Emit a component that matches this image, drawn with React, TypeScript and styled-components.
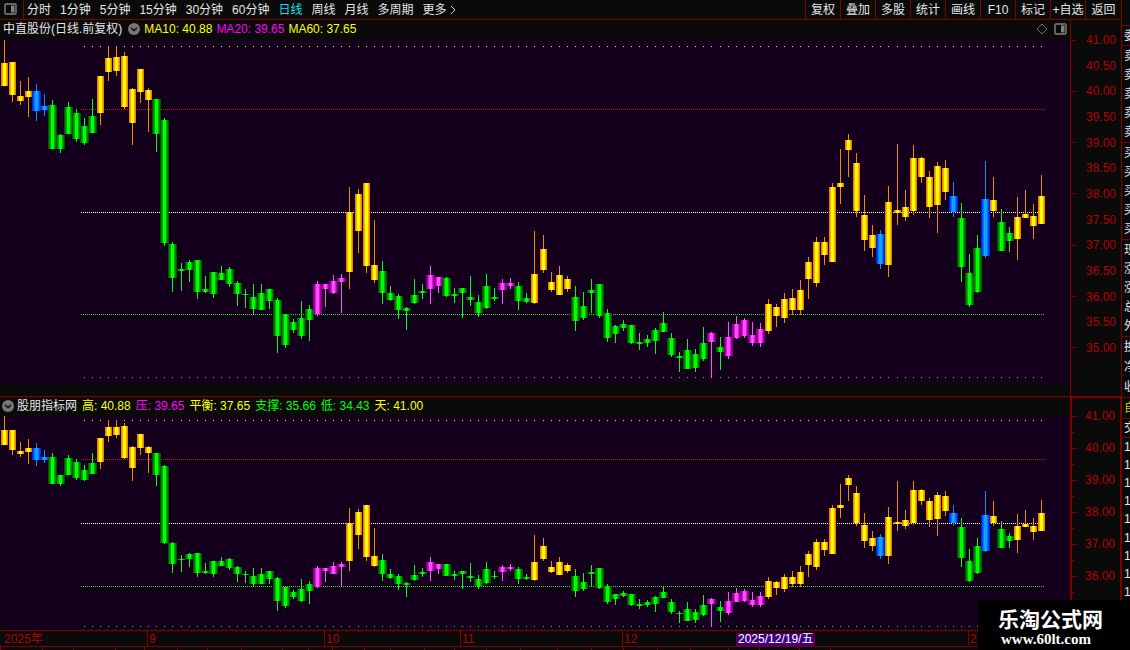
import React from "react";
import styled, { createGlobalStyle } from "styled-components";

const RED = "#800000";

const Global = createGlobalStyle`
  * { box-sizing: border-box; }
  body {
    margin: 0;
    background: #0a0a0a;
    color: #e6e6e6;
    font: 12px/16px "Liberation Sans", "Noto Sans CJK SC", sans-serif;
    overflow: hidden;
  }
  button { font: inherit; }
`;

const Page = styled.div`
  position: relative;
  display: flex;
  height: 100vh;
  overflow: hidden;
`;
const Workspace = styled.main`
  flex: 1;
  min-width: 0;
  display: flex;
  flex-direction: column;
`;
const Toolbar = styled.nav`
  flex: none;
  display: flex;
  height: 20px;
  border-bottom: 1px solid ${RED};
`;
const IconButton = styled.button`
  display: flex;
  align-items: center;
  justify-content: center;
  width: 24px;
  padding: 0 2px 2px 0;
  border: 0;
  border-right: 1px solid ${RED};
  background: none;
`;
const Periods = styled.div`
  flex: 1;
  display: flex;
  gap: 9px;
  padding-left: 3px;
`;
const Period = styled.button<{ $active?: boolean }>`
  display: flex;
  align-items: center;
  padding: 0;
  border: 0;
  background: none;
  white-space: nowrap;
  color: ${(p) => (p.$active ? "#00e6f0" : "#e6e6e6")};
`;
const Tool = styled.button`
  width: 35px;
  padding: 0;
  border: 0;
  border-left: 1px solid ${RED};
  background: none;
  color: #e6e6e6;
  white-space: nowrap;
  &:last-child { width: 36px; }
`;
const Pane = styled.section<{ $divided?: boolean }>`
  flex: none;
  display: flex;
  border-top: ${(p) => (p.$divided ? `1px solid ${RED}` : "0")};
`;
const PaneBody = styled.div<{ $gap?: boolean }>`
  flex: 1;
  min-width: 0;
  padding-bottom: ${(p) => (p.$gap ? "13px" : "0")};
`;
const Legend = styled.header<{ $short?: boolean }>`
  display: flex;
  align-items: center;
  height: ${(p) => (p.$short ? "19px" : "20px")};
  padding: 0 3px 2px 3px;
  gap: 4px;
  white-space: nowrap;
`;
const Title = styled.span`
  color: #e6e6e6;
  margin-right: 2px;
`;
const Reading = styled.span<{ $color: string }>`
  color: ${(p) => p.$color};
`;
const Heading = styled.div`
  display: flex;
  align-items: center;
  gap: 3px;
`;
const Readings = styled.div`
  display: flex;
  gap: 5px;
  margin-left: -1px;
`;
const LowerLegend = styled(Legend)`
  padding-left: 2px;
  gap: 4px;
`;
const HeaderIcons = styled.div`
  display: flex;
  align-items: center;
  gap: 6px;
  margin-left: auto;
`;
const Round = styled.button`
  display: flex;
  padding: 0;
  border: 0;
  background: none;
`;
const Plot = styled.div`
  margin: 0 1px;
  background: #14001c;
  overflow: hidden;
  svg { display: block; margin-left: -1px; }
`;
const Scale = styled.div<{ $strong?: boolean }>`
  flex: none;
  display: flex;
  flex-direction: column;
  justify-content: space-between;
  width: 51px;
  border-left: ${(p) => (p.$strong ? "2px" : "1px")} solid ${RED};
  border-right: ${(p) => (p.$strong ? "1px" : "0")} solid ${RED};
  border-top: ${(p) => (p.$strong ? "1px" : "0")} solid ${RED};
  padding: ${(p) => (p.$strong ? "10px 0 14px" : "12px 0 40px")};
`;
const Mark = styled.div<{ $minor?: boolean }>`
  display: flex;
  align-items: center;
  justify-content: space-between;
  height: 16px;
  padding-right: 5px;
  color: #b40000;
  &::before {
    content: "";
    width: ${(p) => (p.$minor ? "2px" : "5px")};
    height: 1px;
    background: ${RED};
  }
`;
const TimeAxis = styled.div`
  flex: none;
  height: 17px;
  border-top: 1px solid ${RED};
  border-bottom: 1px solid ${RED};
  svg { display: block; }
`;
const TimeLabels = styled.div`
  display: flex;
  height: 13px;
  line-height: 12px;
  margin-top: -1px;
`;
const Month = styled.span<{ $w: number; $first?: boolean }>`
  flex: none;
  width: ${(p) => p.$w}px;
  padding-left: ${(p) => (p.$first ? "4px" : "1px")};
  border-left: ${(p) => (p.$first ? "0" : `1px solid ${RED}`)};
  color: #b40000;
  white-space: nowrap;
`;
const Cursor = styled.span`
  flex: none;
  width: 79px;
  height: 13px;
  margin-right: 153px;
  padding-left: 1px;
  background: #400080;
  border-left: 1px solid ${RED};
  border-right: 1px solid ${RED};
  color: #fff;
  white-space: nowrap;
`;
const Tabs = styled.div`
  flex: none;
  display: flex;
  height: 20px;
`;
const Tab = styled.span<{ $w: number }>`
  flex: none;
  width: ${(p) => p.$w}px;
  border-right: 1px solid ${RED};
`;
const Sidebar = styled.aside`
  flex: none;
  width: 9px;
  overflow: hidden;
  border-left: 1px solid ${RED};
  padding-top: 25px;
  white-space: nowrap;
`;
const Group = styled.div<{ $h: number; $color?: string }>`
  display: flex;
  flex-direction: column;
  justify-content: space-around;
  height: ${(p) => p.$h}px;
  padding-left: 2px;
  border-top: 1px solid ${RED};
  color: ${(p) => p.$color ?? "#e6e6e6"};
`;
const Watermark = styled.div`
  position: absolute;
  right: 0;
  bottom: 0;
  width: 152px;
  height: 50px;
  padding: 6px 0 0 20px;
  background: #000;
  color: #fff;
`;
const Brand = styled.div`
  font: bold 21px/24px "Noto Sans CJK SC", sans-serif;
`;
const Site = styled.div`
  padding-left: 3px;
  font: bold 15px/18px "Liberation Serif", serif;
`;

type Kind = "Y" | "G" | "M" | "B";
type Candle = [Kind, number, number, number, number];

/* kind, high, body top, body bottom, low */
const candles: Candle[] = [
  ["Y", 40, 63, 86, 86], ["Y", 62, 62, 95, 102], ["Y", 81, 96, 101, 105], ["Y", 77, 91, 97, 117],
  ["B", 84, 91, 111, 121], ["B", 94, 106, 110, 116], ["G", 100, 105, 149, 149], ["G", 134, 135, 149, 153],
  ["G", 102, 107, 134, 134], ["G", 109, 113, 139, 142], ["G", 118, 126, 143, 145], ["G", 99, 116, 133, 133],
  ["Y", 76, 76, 113, 125], ["Y", 46, 58, 72, 81], ["Y", 46, 57, 71, 76], ["Y", 52, 56, 107, 109],
  ["Y", 88, 89, 123, 145], ["Y", 69, 69, 92, 103], ["Y", 88, 90, 100, 132], ["G", 99, 99, 134, 152],
  ["G", 118, 120, 243, 246], ["G", 242, 244, 278, 292], ["G", 263, 269, 271, 291], ["G", 260, 262, 270, 282],
  ["G", 260, 260, 292, 299], ["G", 276, 289, 292, 293], ["G", 272, 272, 294, 298], ["G", 266, 273, 280, 280],
  ["G", 267, 269, 284, 287], ["G", 281, 283, 294, 306], ["G", 289, 294, 295, 308], ["G", 284, 297, 309, 314],
  ["G", 284, 293, 310, 310], ["G", 289, 289, 301, 309], ["G", 298, 300, 336, 353], ["G", 314, 314, 345, 348],
  ["G", 319, 322, 330, 333], ["G", 301, 318, 336, 339], ["G", 305, 309, 320, 341], ["M", 281, 284, 314, 316],
  ["M", 284, 284, 289, 307], ["M", 275, 281, 293, 294], ["M", 274, 278, 282, 313], ["Y", 187, 212, 272, 289],
  ["Y", 189, 194, 231, 253], ["Y", 183, 183, 266, 273], ["Y", 220, 265, 280, 283], ["G", 261, 271, 293, 304],
  ["G", 286, 293, 300, 301], ["G", 294, 296, 310, 319], ["G", 307, 308, 311, 330], ["G", 279, 295, 303, 304],
  ["G", 284, 291, 293, 299], ["M", 266, 275, 289, 304], ["M", 277, 277, 286, 293], ["G", 277, 278, 296, 297],
  ["G", 288, 294, 296, 303], ["G", 288, 288, 293, 318], ["G", 276, 297, 300, 306], ["G", 295, 302, 313, 317],
  ["G", 274, 286, 308, 309], ["G", 288, 297, 299, 301], ["M", 279, 283, 290, 304], ["M", 278, 283, 286, 289],
  ["G", 282, 286, 301, 310], ["G", 293, 298, 302, 303], ["Y", 231, 274, 303, 304], ["Y", 235, 249, 270, 273],
  ["Y", 272, 282, 290, 292], ["Y", 266, 275, 295, 295], ["Y", 276, 279, 289, 292], ["G", 286, 297, 321, 331],
  ["G", 292, 306, 318, 320], ["G", 279, 290, 293, 313], ["G", 284, 284, 316, 318], ["G", 309, 313, 338, 342],
  ["G", 325, 326, 334, 343], ["G", 320, 324, 328, 331], ["G", 325, 325, 343, 344], ["G", 333, 342, 344, 350],
  ["G", 335, 339, 343, 347], ["G", 328, 330, 341, 354], ["G", 312, 323, 332, 332], ["G", 333, 338, 355, 357],
  ["G", 352, 356, 358, 372], ["G", 339, 350, 369, 369], ["G", 349, 354, 368, 372], ["G", 327, 343, 359, 361],
  ["M", 332, 333, 342, 378], ["G", 337, 347, 352, 370], ["M", 322, 337, 356, 359], ["M", 316, 324, 338, 339],
  ["M", 318, 320, 336, 338], ["M", 322, 335, 343, 346], ["M", 323, 329, 343, 347], ["Y", 299, 304, 331, 334],
  ["Y", 304, 307, 316, 327], ["Y", 293, 299, 318, 323], ["Y", 289, 298, 310, 315], ["Y", 280, 290, 310, 315],
  ["Y", 257, 262, 279, 299], ["Y", 237, 242, 283, 287], ["Y", 237, 242, 255, 265], ["Y", 183, 187, 262, 262],
  ["Y", 149, 183, 187, 204], ["Y", 134, 140, 150, 177], ["Y", 153, 163, 211, 217], ["Y", 195, 215, 240, 251],
  ["Y", 225, 235, 248, 257], ["B", 230, 234, 264, 269], ["Y", 186, 202, 265, 277], ["Y", 144, 210, 213, 225],
  ["Y", 190, 207, 217, 221], ["Y", 145, 158, 211, 215], ["Y", 157, 158, 177, 183], ["Y", 171, 177, 207, 218],
  ["Y", 162, 166, 205, 233], ["Y", 160, 168, 192, 200], ["B", 182, 196, 212, 217], ["G", 203, 218, 267, 282],
  ["G", 254, 273, 305, 307], ["G", 235, 248, 292, 293], ["B", 161, 199, 256, 258], ["Y", 177, 200, 211, 217],
  ["G", 209, 222, 251, 251], ["G", 227, 233, 241, 252], ["Y", 197, 217, 239, 260], ["Y", 190, 214, 218, 218],
  ["Y", 204, 216, 226, 239], ["Y", 175, 196, 224, 224],
];

const xOf = (i: number) => 4 + i * 8 + [22, 44, 67, 89, 111].filter((n) => i >= n).length;

/* body bands from the outside in, then the wick */
const shades: Record<Kind, { bands: string[]; wick: string }> = {
  Y: { bands: ["#e88000", "#ffae00", "#ffff00"], wick: "#f08c00" },
  G: { bands: ["#005800", "#007c00", "#00b000", "#00ff00"], wick: "#00ff1e" },
  M: { bands: ["#7c007c", "#a800a8", "#dc14dc", "#ff50ff"], wick: "#ff50ff" },
  B: { bands: ["#0028dc", "#0046ff", "#0078ff", "#14a0ff"], wick: "#0a8cff" },
};

function Chart({ height, map, levels }: { height: number; map: (y: number) => number; levels: number[] }) {
  const [top, resist, mid, support, low] = levels;
  return (
    <svg width={1070} height={height} shapeRendering="crispEdges" role="img" aria-label="K线图">
      {candles.map((_, i) =>
        i < 10 ? null : (
          <g key={i}>
            <rect x={xOf(i)} y={top} width={1} height={1} fill="#ffff00" />
            <rect x={xOf(i)} y={low} width={1} height={1} fill="#00ff00" />
          </g>
        )
      )}
      <path d={`M81 ${resist + 0.5}H1045`} stroke="#c81414" strokeDasharray="1 1" />
      <path d={`M81 ${mid + 0.5}H1045`} stroke="#ffffff" strokeDasharray="1 1" />
      <path d={`M81 ${support + 0.5}H1045`} stroke="#00ff00" strokeDasharray="1 1" />
      {candles.map(([kind, h, t, b, l], i) => {
        const x = xOf(i);
        const { bands, wick } = shades[kind];
        const bodyTop = map(t);
        return (
          <g key={i}>
            <rect x={x} y={map(h)} width={1} height={Math.max(1, map(l) - map(h))} fill={wick} />
            {bands.map((c, n) => {
              const half = bands.length - n;
              return (
                <rect
                  key={c}
                  x={x - half}
                  y={bodyTop}
                  width={half * 2 + 1}
                  height={Math.max(1, map(b) - bodyTop)}
                  fill={c}
                />
              );
            })}
          </g>
        );
      })}
    </svg>
  );
}

const PanelIcon = () => (
  <svg width="13" height="12" viewBox="0 0 13 12">
    <rect x="1" y="1" width="11" height="10" rx="1" fill="none" stroke="#828282" strokeWidth="1.4" />
    <rect x="7" y="2.5" width="3.5" height="7" fill="#828282" />
  </svg>
);
const Chevron = () => (
  <svg width="12" height="12" viewBox="0 0 12 12">
    <circle cx="6" cy="6" r="6" fill="#777" />
    <path d="M3 4.8L6 7.6L9 4.8" fill="none" stroke="#111" strokeWidth="1.5" />
  </svg>
);
const Diamond = () => (
  <svg width="12" height="12" viewBox="0 0 12 12">
    <path d="M6 1L11 6L6 11L1 6Z" fill="none" stroke="#707070" />
  </svg>
);

const periods = ["分时", "1分钟", "5分钟", "15分钟", "30分钟", "60分钟", "日线", "周线", "月线", "多周期"];
const tools = ["复权", "叠加", "多股", "统计", "画线", "F10", "标记", "+自选", "返回"];
const prices = ["41.00", "40.50", "40.00", "39.50", "39.00", "38.50", "38.00", "37.50", "37.00", "36.50", "36.00", "35.50", "35.00"];
const lowerPrices = ["41.00", "", "40.00", "", "39.00", "", "38.00", "", "37.00", "", "36.00", "", ""];
const tickXs = [191, 236, 280, 358, 393, 428, 502, 542, 582, 668, 715, 847, 888, 928];
const monthXs = [147, 324, 460, 622, 968];
const tabs = [1, 42, 31, 42, 29, 33, 30, 34, 41, 26, 24, 32, 26, 34, 30, 32, 34, 37, 34, 32, 34, 33, 38, 31, 40, 31];
const side: { h: number; items: string[]; color?: string }[] = [
  { h: 20, items: ["委"] },
  { h: 97, items: ["卖", "卖", "卖", "卖", "卖"] },
  { h: 97, items: ["买", "买", "买", "买", "买"] },
  { h: 97, items: ["现", "涨", "涨", "总", "外"] },
  { h: 61, items: ["换", "净", "收"] },
  { h: 21, items: ["自"], color: "#c8c800" },
  { h: 19, items: ["交"] },
  { h: 164, items: ["1", "1", "1", "1", "1", "1", "1", "1", "1"] },
];

export default function App() {
  return (
    <Page>
      <Global />
      <Workspace>
        <Toolbar>
          <IconButton aria-label="侧栏"><PanelIcon /></IconButton>
          <Periods>
            {periods.map((p) => <Period key={p} $active={p === "日线"}>{p}</Period>)}
            <Period>
              更多
              <svg width="10" height="10" viewBox="0 0 10 10">
                <path d="M4 1L8 5L4 9" fill="none" stroke="#d0d0d0" />
              </svg>
            </Period>
          </Periods>
          {tools.map((t) => <Tool key={t}>{t}</Tool>)}
        </Toolbar>
        <Pane>
          <PaneBody $gap>
            <Legend>
              <Title>中直股份(日线.前复权)</Title>
              <Round aria-label="展开"><Chevron /></Round>
              <Reading $color="#ffff00">MA10: 40.88</Reading>
              <Reading $color="#ff00ff">MA20: 39.65</Reading>
              <Reading $color="#ffff00">MA60: 37.65</Reading>
              <HeaderIcons><Diamond /><PanelIcon /></HeaderIcons>
            </Legend>
            <Plot>
              <Chart height={343} map={(y) => y - 40} levels={[6, 69, 172, 274, 337]} />
            </Plot>
          </PaneBody>
          <Scale>
            {prices.map((p, i) => <Mark key={p} $minor={i % 2 === 1}>{p}</Mark>)}
          </Scale>
        </Pane>
        <Pane $divided>
          <PaneBody>
            <LowerLegend $short>
              <Heading>
                <Round aria-label="展开"><Chevron /></Round>
                <Title>股朋指标网</Title>
              </Heading>
              <Readings>
                <Reading $color="#ffff00">高: 40.88</Reading>
                <Reading $color="#ff00ff">压: 39.65</Reading>
                <Reading $color="#ffff00">平衡: 37.65</Reading>
                <Reading $color="#00ff00">支撑: 35.66</Reading>
                <Reading $color="#00ff00">低: 34.43</Reading>
                <Reading $color="#ffff00">天: 41.00</Reading>
              </Readings>
            </LowerLegend>
            <Plot>
              <Chart height={214} map={(y) => Math.round((y - 40) * 0.6234)} levels={[4, 43, 107, 170, 210]} />
            </Plot>
          </PaneBody>
          <Scale $strong>
            {lowerPrices.map((p, i) => <Mark key={i} $minor={i % 2 === 1}>{p}</Mark>)}
          </Scale>
        </Pane>
        <TimeAxis>
          <svg width="1070" height="3" shapeRendering="crispEdges">
            {tickXs.map((x) => <rect key={x} x={x} width="1" height="2" fill={RED} />)}
            {monthXs.map((x) => <rect key={x} x={x} width="1" height="3" fill={RED} />)}
          </svg>
          <TimeLabels>
            <Month $w={147} $first>2025年</Month>
            <Month $w={177}>9</Month>
            <Month $w={136}>10</Month>
            <Month $w={162}>11</Month>
            <Month $w={114}>12</Month>
            <Cursor>2025/12/19/五</Cursor>
            <Month $w={10}>2</Month>
          </TimeLabels>
        </TimeAxis>
        <Tabs>
          {tabs.map((w, i) => <Tab key={i} $w={w} />)}
        </Tabs>
      </Workspace>
      <Sidebar>
        {side.map((g, i) => (
          <Group key={i} $h={g.h} $color={g.color}>
            {g.items.map((t, n) => <span key={n}>{t}</span>)}
          </Group>
        ))}
      </Sidebar>
      <Watermark>
        <Brand>乐淘公式网</Brand>
        <Site>www.60lt.com</Site>
      </Watermark>
    </Page>
  );
}
